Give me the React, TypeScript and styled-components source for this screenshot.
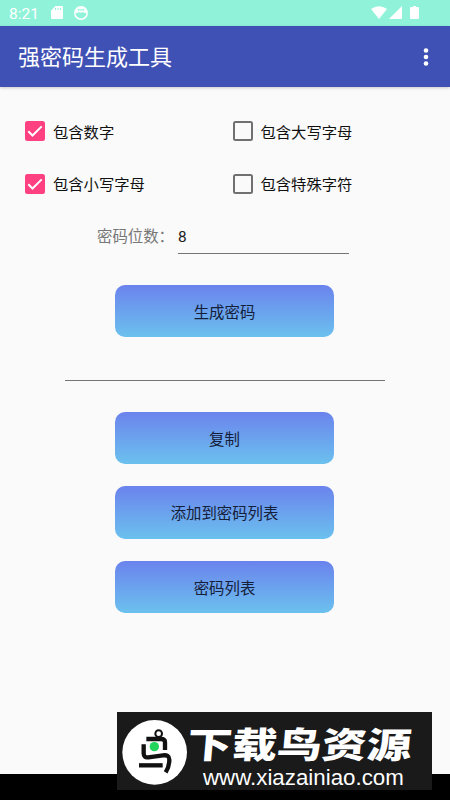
import React, { useState } from 'react';
import styled, { createGlobalStyle } from 'styled-components';

const GlobalStyle = createGlobalStyle`
  * { box-sizing: border-box; }
  body {
    margin: 0;
    background: #fafafa;
    font-family: Roboto, "Noto Sans CJK SC", sans-serif;
  }
  button, input { font-family: inherit; }
`;

const Screen = styled.div`
  position: relative;
  display: flex;
  flex-direction: column;
  width: 450px;
  height: 800px;
  overflow: hidden;
  background: #fafafa;
`;

const StatusBar = styled.header`
  display: flex;
  flex: 0 0 26px;
  align-items: center;
  justify-content: space-between;
  padding: 0 30px 0 9px;
  background: #90f3d9;
  color: #fff;
`;

const StatusGroup = styled.div`
  display: flex;
  align-items: center;
`;

const Clock = styled.span`
  width: 42px;
  padding-top: 2px;
  font-size: 15.5px;
  line-height: 24px;
`;

const AppBar = styled.div`
  display: flex;
  flex: 0 0 61px;
  align-items: center;
  justify-content: space-between;
  padding: 0 19px 0 18px;
  background: #3f51b5;
  color: #fff;
  box-shadow: 0 1px 3px rgba(0, 0, 0, 0.2);
`;

const Title = styled.h1`
  margin: 0;
  padding-top: 3px;
  font-size: 22px;
  font-weight: 400;
  line-height: 32px;
`;

const MenuButton = styled.button`
  display: flex;
  padding: 0;
  border: 0;
  background: none;
`;

const Content = styled.main`
  display: flex;
  flex: 1;
  flex-direction: column;
  align-items: center;
`;

const Options = styled.div`
  display: grid;
  grid-template-columns: 207.5px 1fr;
  grid-auto-rows: 52.5px;
  width: 100%;
  padding: 18px 0 0 25px;
`;

const Option = styled.label`
  display: flex;
  align-items: center;
  gap: 8px;
  color: #111;
  font-size: 15.3px;
  line-height: 22px;
`;

const OptionText = styled.span`
  padding-top: 3px;
`;

const Box = styled.span<{ $checked: boolean }>`
  display: flex;
  width: 20px;
  height: 20px;
  border: 2px solid ${(p) => (p.$checked ? '#ff4081' : '#707070')};
  border-radius: 2.5px;
  background: ${(p) => (p.$checked ? '#ff4081' : 'transparent')};
`;

const HiddenCheck = styled.input`
  display: none;
`;

const LengthRow = styled.div`
  display: flex;
  width: 252px;
  height: 33px;
  margin: 11px 4px 0 0;
  font-size: 15.4px;
`;

const LengthLabel = styled.span`
  width: 81px;
  color: #777;
  line-height: 32px;
  white-space: nowrap;
`;

const Field = styled.input<{ $width: number }>`
  width: ${(p) => p.$width}px;
  height: 33px;
  padding: 0 0 1px;
  border: 0;
  border-bottom: 1px solid #747474;
  border-radius: 0;
  outline: none;
  background: transparent;
  color: #222;
  font-size: 15.4px;
`;

const Result = styled.div`
  display: flex;
  margin: 11px 0 31px;
`;

const ActionButton = styled.button`
  width: 219px;
  height: 52.3px;
  padding: 0;
  border: 0;
  border-radius: 10px;
  background: linear-gradient(#6b83ed, #6bc1ee);
  color: #14203a;
  font-size: 15.4px;
`;

const Generate = styled.div`
  margin: 30.5px 1px 0 0;
`;

const Actions = styled.div`
  display: flex;
  flex-direction: column;
  gap: 22.2px;
  margin-right: 1px;
`;

const NavigationBar = styled.footer`
  flex: 0 0 26px;
  background: #000;
`;

const Watermark = styled.aside`
  position: absolute;
  left: 117px;
  top: 712px;
  display: flex;
  width: 315px;
  height: 78px;
  background: #1a1a1a;
  color: #fff;
`;

const BrandText = styled.div`
  display: flex;
  flex-direction: column;
  width: 235px;
`;

const BrandName = styled.strong`
  height: 54px;
  padding-top: 7px;
  margin-left: -9px;
  font-family: "Noto Sans CJK SC", sans-serif;
  font-size: 38px;
  font-weight: 900;
  line-height: 48px;
  white-space: nowrap;
  transform: scale(1.18, 0.94) skewX(-4deg);
  transform-origin: left center;
`;

const BrandUrl = styled.span`
  padding-left: 6px;
  font-family: "Liberation Sans", sans-serif;
  font-size: 22.3px;
  line-height: 24px;
`;

const BirdLogo = () => (
  <svg width="80" height="78" viewBox="0 0 240 234" fill="none">
    <circle cx="113" cy="121" r="97" fill="#fff" />
    <g stroke="#111" strokeWidth="13">
      <circle cx="125" cy="65" r="10" strokeWidth="6" />
      <path d="M88 81H132Q144 81 144 91V114" />
      <path d="M80 97V124Q80 138 94 136L138 130Q157 128 157 143Q157 164 146 181" />
      <path d="M66 160H137" />
    </g>
    <circle cx="112" cy="104" r="14" fill="#20d45c" />
  </svg>
);

const NotificationIcons = () => (
  <svg width="40" height="16" viewBox="0 0 40 16">
    <path fill="#fff" d="M4.5 1H11q1 0 1 1v11q0 1-1 1H1q-1 0-1-1V5.5Z" />
    <path stroke="#90f3d9" d="M4.5 3v2M7 3v2M9.5 3v2" />
    <circle cx="30" cy="8" r="6.2" fill="none" stroke="#fff" strokeWidth="1.5" />
    <path fill="#fff" d="M24.5 5.5Q26 1.5 30 1.5t5.5 4v2q-1.5 1-2.5 0-1-1-2 0h-2q-1-1-2 0-1 1-2.5 0Z" />
    <path fill="#90f3d9" d="m26.5 3.6 1.7.9h3.6l1.7-.9-.5 1.8h-6Z" />
  </svg>
);

const SystemIcons = () => (
  <svg width="49" height="16" viewBox="0 0 49 16" fill="#fff">
    <path d="M0 4Q8-1.5 16 4L8 14Z" />
    <path d="M31 1V14H18Z" />
    <path d="M42 1h3v1h2q1 0 1 1v10q0 1-1 1h-7q-1 0-1-1V3q0-1 1-1h2Z" />
  </svg>
);

const options = [
  { name: '包含数字', initial: true },
  { name: '包含大写字母', initial: false },
  { name: '包含小写字母', initial: true },
  { name: '包含特殊字符', initial: false },
];

function CheckOption({ name, initial }: { name: string; initial: boolean }) {
  const [checked, setChecked] = useState(initial);
  return (
    <Option>
      <HiddenCheck type="checkbox" checked={checked} onChange={() => setChecked(!checked)} />
      <Box $checked={checked}>
        {checked && (
          <svg width="16" height="16" viewBox="0 0 16 16" fill="none">
            <path d="m1.3 8.3 4.2 4.2L14.7 3.4" stroke="#fff" strokeWidth="2" />
          </svg>
        )}
      </Box>
      <OptionText>{name}</OptionText>
    </Option>
  );
}

export default function App() {
  return (
    <>
      <GlobalStyle />
      <Screen>
        <StatusBar>
          <StatusGroup>
            <Clock>8:21</Clock>
            <NotificationIcons />
          </StatusGroup>
          <SystemIcons />
        </StatusBar>
        <AppBar>
          <Title>强密码生成工具</Title>
          <MenuButton aria-label="更多">
            <svg width="10" height="22" viewBox="0 0 10 22" fill="#fff">
              <circle cx="5" cy="4.5" r="2.3" />
              <circle cx="5" cy="11" r="2.3" />
              <circle cx="5" cy="17.5" r="2.3" />
            </svg>
          </MenuButton>
        </AppBar>
        <Content>
          <Options>
            {options.map((o) => <CheckOption key={o.name} {...o} />)}
          </Options>
          <LengthRow>
            <LengthLabel>密码位数：</LengthLabel>
            <Field $width={171} defaultValue="8" aria-label="密码位数" />
          </LengthRow>
          <Generate><ActionButton>生成密码</ActionButton></Generate>
          <Result><Field $width={320} aria-label="密码" /></Result>
          <Actions>
            <ActionButton>复制</ActionButton>
            <ActionButton>添加到密码列表</ActionButton>
            <ActionButton>密码列表</ActionButton>
          </Actions>
        </Content>
        <NavigationBar />
        <Watermark>
          <BirdLogo />
          <BrandText>
            <BrandName>下载鸟资源</BrandName>
            <BrandUrl>www.xiazainiao.com</BrandUrl>
          </BrandText>
        </Watermark>
      </Screen>
    </>
  );
}
